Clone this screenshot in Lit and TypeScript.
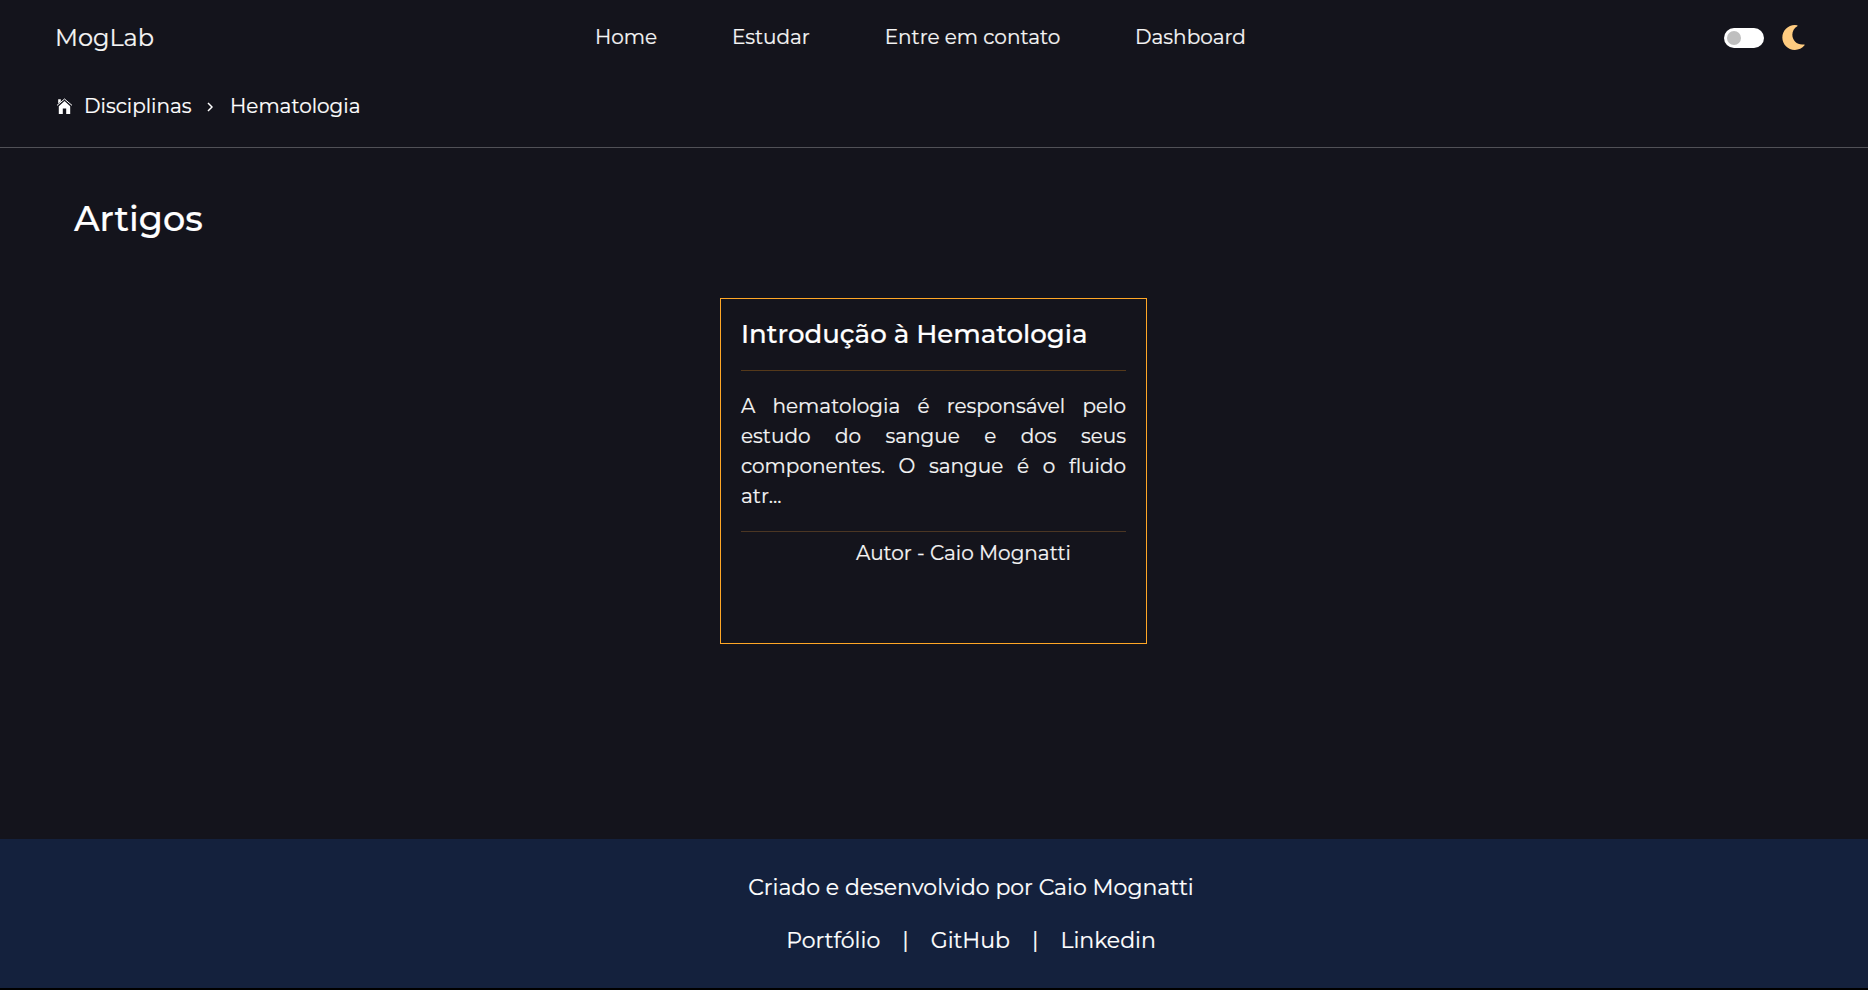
import { LitElement, html, css } from "lit";
import { customElement, state } from "lit/decorators.js";

const NAV = ["Home", "Estudar", "Entre em contato", "Dashboard"];
const LINKS = ["Portfólio", "GitHub", "Linkedin"];

@customElement("app-header")
class AppHeader extends LitElement {
  @state() private on = false;

  static styles = css`
    :host { display: block; color: #f5f5f5; }
    .bar { display: flex; align-items: center; height: 74px; padding: 0 62px 0 55px; box-sizing: border-box; }
    .logo { width: 540px; font-size: 24px; line-height: 74px; padding-top: 1px; }
    .nav { display: flex; gap: 74.8px; font-size: 20px; line-height: 74px; flex: 1; white-space: nowrap; }
    .tools { display: flex; align-items: center; gap: 17px; }
    .switch { width: 40px; height: 20px; padding: 0 3px; border: 0; border-radius: 10px; background: #fff; display: flex; align-items: center; margin-top: 2px; }
    .switch.on { justify-content: flex-end; }
    .knob { width: 14px; height: 14px; border-radius: 50%; background: #bfbfbf; }
    .moon { width: 25px; height: 25px; display: block; margin-top: 1px; }
  `;

  render() {
    return html`
      <header class="bar">
        <div class="logo">MogLab</div>
        <nav class="nav">${NAV.map((n) => html`<span>${n}</span>`)}</nav>
        <div class="tools">
          <button class="switch ${this.on ? "on" : ""}" aria-label="Tema" @click=${() => (this.on = !this.on)}>
            <span class="knob"></span>
          </button>
          <svg class="moon" viewBox="0 0 512 512" fill="#ffcc80">
            <path d="M283.211 512c78.962 0 151.079-35.925 198.857-94.792 7.068-8.708-.639-21.43-11.562-19.35-124.203 23.654-238.262-71.576-238.262-196.954 0-72.222 38.662-138.635 101.498-174.394 9.686-5.512 7.25-20.197-3.756-22.23A258.156 258.156 0 0 0 283.211 0c-141.309 0-256 114.511-256 256 0 141.309 114.511 256 256 256z" />
          </svg>
        </div>
      </header>
    `;
  }
}

@customElement("app-breadcrumb")
class AppBreadcrumb extends LitElement {
  static styles = css`
    :host { display: block; color: #fff; border-bottom: 1px solid #515157; }
    .trail { display: flex; align-items: center; height: 73px; box-sizing: border-box; padding: 0 0 9px 56px; font-size: 20px; line-height: 24px; }
    .home { width: 16px; height: 16px; margin-right: 12px; }
    .chev { width: 6px; height: 10px; margin: 2px 17px 0 15.5px; }
  `;

  render() {
    return html`
      <div class="trail">
        <svg class="home" viewBox="0 0 16 16" fill="#fff">
          <path d="M2.8 8.2 8.5 2.9 14.2 8.2V16H10.2V10.6H6.8V16H2.8Z" />
          <path d="M2.2 1.2H4.8V3.4L2.2 5.6Z" />
          <path d="M1 7.4 8.5 1 16 7.4" fill="none" stroke="#fff" stroke-width="1" />
        </svg>
        <span>Disciplinas</span>
        <svg class="chev" viewBox="0 0 6 10" fill="none" stroke="#fff" stroke-width="1.5">
          <path d="M1 1 5 5 1 9" />
        </svg>
        <span>Hematologia</span>
      </div>
    `;
  }
}

@customElement("article-card")
class ArticleCard extends LitElement {
  static styles = css`
    :host { display: block; box-sizing: border-box; width: 427px; height: 346px; padding: 20px; border: 1px solid #ffa726; color: #f5f5f5; }
    .title { margin: 0; padding-bottom: 21px; font-size: 26px; font-weight: 500; line-height: 30px; color: #fff; border-bottom: 1px solid #55391a; white-space: nowrap; }
    .text { margin: 0; padding: 20px 0; font-size: 20px; line-height: 30px; text-align: justify; border-bottom: 1px solid #4b3623; }
    .author { padding: 6px 0 0 115px; font-size: 20px; line-height: 30px; }
  `;

  render() {
    return html`
      <h2 class="title">Introdução à Hematologia</h2>
      <p class="text">A hematologia é responsável pelo estudo do sangue e dos seus componentes. O sangue é o fluido atr...</p>
      <div class="author">Autor - Caio Mognatti</div>
    `;
  }
}

@customElement("app-footer")
class AppFooter extends LitElement {
  static styles = css`
    :host { display: flex; flex-direction: column; align-items: center; gap: 23px; box-sizing: border-box; height: 149px; padding: 34px 0 0 74px; background: #14213d; color: #fff; font-size: 22px; line-height: 30px; }
    .links { display: flex; gap: 22px; }
  `;

  render() {
    return html`
      <div>Criado e desenvolvido por Caio Mognatti</div>
      <div class="links">
        ${LINKS.map((l, i) => html`${i ? html`<span>|</span>` : ""}<span>${l}</span>`)}
      </div>
    `;
  }
}

@customElement("app-root")
class AppRoot extends LitElement {
  static styles = css`
    :host { display: flex; flex-direction: column; box-sizing: border-box; height: 990px; border-bottom: 2px solid #000; background: #14141c; font-family: Montserrat, Inter, sans-serif; -webkit-text-stroke: 0.2px currentColor; overflow: hidden; }
    .main { flex: 1; display: flex; flex-direction: column; padding-top: 49px; }
    .heading { margin: 0 0 58px 74px; font-size: 35px; font-weight: 500; line-height: 43px; color: #fff; }
    .cards { display: flex; justify-content: center; padding-right: 1px; }
  `;

  render() {
    return html`
      <app-header></app-header>
      <app-breadcrumb></app-breadcrumb>
      <main class="main">
        <h1 class="heading">Artigos</h1>
        <div class="cards"><article-card></article-card></div>
      </main>
      <app-footer></app-footer>
    `;
  }
}
